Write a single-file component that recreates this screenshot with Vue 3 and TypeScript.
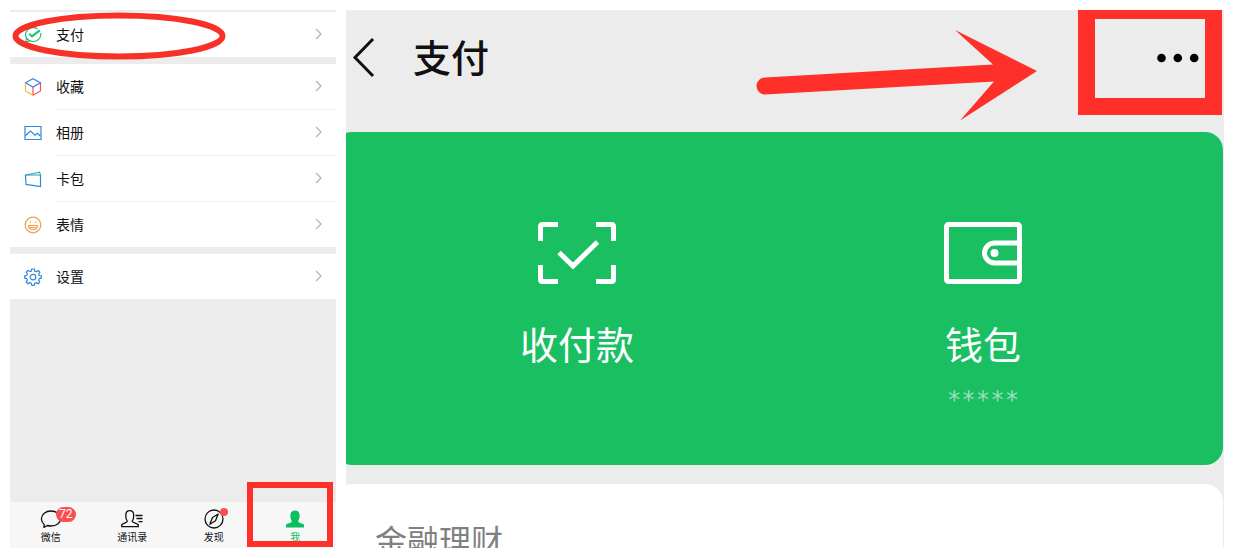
<script setup lang="ts">
type IconName = 'pay' | 'cube' | 'album' | 'cards' | 'sticker' | 'gear'

interface MenuItem {
  label: string
  icon: IconName
}

interface Tab {
  label: string
  icon: 'chat' | 'contacts' | 'discover' | 'me'
  badge?: string
  dot?: boolean
  active?: boolean
}

const groups: MenuItem[][] = [
  [{ label: '支付', icon: 'pay' }],
  [
    { label: '收藏', icon: 'cube' },
    { label: '相册', icon: 'album' },
    { label: '卡包', icon: 'cards' },
    { label: '表情', icon: 'sticker' },
  ],
  [{ label: '设置', icon: 'gear' }],
]

const tabs: Tab[] = [
  { label: '微信', icon: 'chat', badge: '72' },
  { label: '通讯录', icon: 'contacts' },
  { label: '发现', icon: 'discover', dot: true },
  { label: '我', icon: 'me', active: true },
]
</script>

<template>
  <main class="page">
    <section class="profile" aria-label="我">
      <nav class="menu">
        <div v-for="(group, g) in groups" :key="g" class="group">
          <button v-for="item in group" :key="item.label" type="button" class="row">
            <svg class="row-icon" viewBox="0 0 18 18" aria-hidden="true">
              <g v-if="item.icon === 'pay'" stroke="#22c16b">
                <path d="M16.6 7.2A7.6 6.9 0 1 1 13.6 3M2.4 12.2L1.9 16.2L5.4 15" />
                <path d="M5.2 7.8L8 10.4L15.8 4.4" stroke-width="2" />
              </g>
              <g v-else-if="item.icon === 'cube'">
                <path d="M1.500 4.800L9 .8L16.500 4.800L9 9Z" stroke="#3d83e6" />
                <path d="M16.500 4.800V13L9 17.200V9" stroke="#f0506e" />
                <path d="M1.500 4.800V13L9 17.200" stroke="#f5b83d" />
              </g>
              <g v-else-if="item.icon === 'album'" stroke="#2f86dc">
                <path d="M1 2.5H17V15.5H1Z" />
                <path d="M1.5 11.5L6.5 7L11 11.2L13.3 9.2L16.5 12.2" />
              </g>
              <g v-else-if="item.icon === 'cards'">
                <path d="M2 5L15.5 2.2L16.5 4.5" stroke="#2fc27c" />
                <path d="M1.5 5H16.5V16.5L2 14.4Z" stroke="#2d8bd5" />
              </g>
              <g v-else-if="item.icon === 'sticker'" stroke="#f0a050">
                <circle cx="9" cy="9" r="7.8" />
                <path d="M4.5 9.5H13.5C13.4 12 11.5 13.5 9 13.5S4.6 12 4.5 9.5ZM6.2 11.5H11.8" />
                <path d="M5.8 6.2H6.8M11.2 6.2H12.2" stroke-width="1.8" />
              </g>
              <g v-else stroke="#2f86dc" stroke-linejoin="round">
                <path d="M7.7 1H10.3L10.8 3.1L12.3 3.7L14.2 2.5L15.9 4.2L14.7 6L15.2 7.5L17.3 7.8V10.2L15.2 10.6L14.6 12.1L15.8 14L14 15.8L12.2 14.6L10.7 15.2L10.2 17.3H7.8L7.3 15.2L5.8 14.6L4 15.8L2.2 14L3.4 12.1L2.8 10.6L.7 10.2V7.8L2.8 7.4L3.4 5.9L2.2 4.1L3.9 2.4L5.8 3.6L7.2 3.1Z" />
                <circle cx="9" cy="9.1" r="2.8" />
              </g>
            </svg>
            <span class="row-label">
              <span>{{ item.label }}</span>
              <svg class="chevron" viewBox="0 0 7 12" aria-hidden="true"><path d="M1 1L6 6L1 11" /></svg>
            </span>
          </button>
        </div>
      </nav>

      <nav class="tabs">
        <button v-for="tab in tabs" :key="tab.label" type="button" class="tab" :class="{ active: tab.active }">
          <span class="tab-icon">
            <svg viewBox="0 0 24 20" aria-hidden="true">
              <path v-if="tab.icon === 'chat'" d="M5.2 15.4C3.4 14 2.4 12 2.4 9.8C2.4 5.5 6.7 2 12 2S21.6 5.5 21.6 9.8S17.3 17 12 17C10.7 17 9.5 16.8 8.4 16.5L4.9 18.4Z" />
              <g v-else-if="tab.icon === 'contacts'">
                <path d="M1.7 17.7V15.8C2.8 14.3 7.3 13.7 7.3 12.2C6.2 10.7 5.8 9 5.8 6.4C5.8 3.5 7.2 1.7 9.7 1.7S13.7 3.5 13.7 6.4C13.7 9 13.2 10.7 12.2 12.2C12.2 13.7 17 14.3 18.3 15.8V17.7Z" />
                <path d="M15.5 6.5H22.5M16.5 9.5H22.5M18.5 12.7H22.5" />
              </g>
              <g v-else-if="tab.icon === 'discover'">
                <circle cx="12" cy="10" r="9" />
                <path d="M16.2 5L13.5 11.7L7.8 15.2L10.5 8.5Z" />
              </g>
              <path v-else class="solid" d="M3 18.5V15.8C4.2 14.3 9 13.7 9 12.2C7.9 10.7 7.4 9 7.4 6.4C7.4 3.3 9.2 1.5 12 1.5S16.6 3.3 16.6 6.4C16.6 9 16.1 10.7 15 12.2C15 13.7 19.8 14.3 21 15.8V18.5Z" />
            </svg>
            <span v-if="tab.badge" class="badge">{{ tab.badge }}</span>
            <span v-if="tab.dot" class="dot"></span>
          </span>
          <span class="tab-label">{{ tab.label }}</span>
        </button>
        <span class="tab-mark"></span>
      </nav>

      <svg class="ring" viewBox="0 0 214 48" aria-hidden="true">
        <ellipse cx="107" cy="24" rx="103.5" ry="20.5" />
      </svg>
    </section>

    <section class="payment" aria-label="支付">
      <header class="bar">
        <button type="button" class="back" aria-label="返回">
          <svg viewBox="0 0 24 42" aria-hidden="true"><path d="M21 2L3 20.5L21 39" /></svg>
        </button>
        <h1>支付</h1>
        <button type="button" class="more" aria-label="更多">
          <svg viewBox="0 0 42 10" aria-hidden="true">
            <circle cx="4.500" cy="5" r="4.300" />
            <circle cx="20.800" cy="5" r="4.300" />
            <circle cx="37.200" cy="5" r="4.300" />
          </svg>
        </button>
        <svg class="arrow" viewBox="0 0 282 92" aria-hidden="true">
          <path d="M9 48.5L237 35.5L199 1L281 42L204 91.5L238 52.5L9 65.5A8.5 8.5 0 0 1 9 48.5Z" />
        </svg>
        <span class="more-mark"></span>
      </header>

      <div class="wallet">
        <button type="button" class="action">
          <svg viewBox="0 0 78 62" aria-hidden="true">
            <path d="M2.5 19V4.5Q2.5 2.5 4.5 2.5H20M58 2.5H73.5Q75.5 2.5 75.5 4.5V19M75.5 43V57.5Q75.5 59.5 73.5 59.5H58M20 59.5H4.5Q2.5 59.5 2.5 57.5V43" />
            <path d="M21 30.5L35 44L59.5 20" />
          </svg>
          <span class="action-label">收付款</span>
        </button>
        <button type="button" class="action">
          <svg viewBox="0 0 78 62" aria-hidden="true">
            <rect x="2.5" y="2.5" width="73" height="57" rx="2" />
            <path d="M75 21H50.500A10 10 0 0 0 50.500 41H75" />
            <circle class="clasp" cx="50.500" cy="31" r="4" />
          </svg>
          <span class="action-label">钱包</span>
          <span class="balance">*****</span>
        </button>
      </div>

      <div class="finance">
        <h2>金融理财</h2>
      </div>
    </section>
  </main>
</template>

<style>
body {
  margin: 0;
  background: #fff;
}
</style>

<style scoped>
.page {
  box-sizing: border-box;
  height: 100vh;
  padding: 10px;
  display: grid;
  grid-template-columns: 326fr 878fr;
  gap: 10px;
  font-family: "Liberation Sans", "Noto Sans CJK SC", sans-serif;
  color: #111;
}

button {
  margin: 0;
  padding: 0;
  border: 0;
  background: none;
  font: inherit;
  color: inherit;
  cursor: pointer;
}

svg {
  display: block;
  fill: none;
}

.profile {
  position: relative;
  min-height: 0;
  display: flex;
  flex-direction: column;
  justify-content: space-between;
  background: #ececec;
}

.menu {
  display: flex;
  flex-direction: column;
  gap: 7px;
  padding-top: 2px;
}

.group {
  background: #fff;
}

.row {
  width: 100%;
  display: flex;
  align-items: center;
  gap: 14px;
  padding-left: 14px;
  font-size: 14px;
  text-align: left;
}

.row-icon {
  width: 18px;
  height: 18px;
  stroke-width: 1.2;
}

.row-label {
  flex: 1;
  height: 43px;
  display: flex;
  align-items: center;
  justify-content: space-between;
  padding: 0 14px 2px 0;
}

.row:not(:last-child) .row-label {
  border-bottom: 1px solid #f1f1f1;
}

.chevron {
  width: 7px;
  height: 12px;
  stroke: #b4b4b4;
  stroke-width: 1.3;
}

.tabs {
  position: relative;
  display: grid;
  grid-template-columns: repeat(4, 1fr);
  background: #f7f7f7;
}

.tab {
  height: 46px;
  display: flex;
  flex-direction: column;
  align-items: center;
  padding-top: 7px;
}

.tab-icon {
  position: relative;
}

.tab-icon svg {
  width: 24px;
  height: 20px;
  stroke: #111;
  stroke-width: 1.3;
  stroke-linejoin: round;
}

.tab-icon .solid {
  fill: #07c160;
  stroke: none;
}

.tab-label {
  font-size: 10px;
  line-height: 17px;
}

.active {
  color: #07c160;
}

.badge {
  position: absolute;
  left: 17px;
  top: -2px;
  width: 20px;
  border-radius: 8px;
  background: #f94f50;
  color: #fff;
  font: 12px/15px Roboto, sans-serif;
  text-align: center;
}

.dot {
  position: absolute;
  left: 18px;
  top: -1px;
  width: 8px;
  height: 8px;
  border-radius: 50%;
  background: #fa4b57;
}

.tab-mark {
  position: absolute;
  right: 3px;
  top: -20px;
  bottom: 1px;
  width: 74px;
  border: 6px solid #ff3029;
  pointer-events: none;
}

.ring {
  position: absolute;
  left: 2px;
  top: 2px;
  width: 214px;
  height: 48px;
  stroke: #f83128;
  stroke-width: 6;
  pointer-events: none;
}

.payment {
  min-height: 0;
  overflow: hidden;
  background: #ececec;
}

.bar {
  position: relative;
  box-sizing: border-box;
  height: 122px;
  display: flex;
  align-items: center;
  padding: 0 25px 26px 6px;
}

.back svg {
  width: 24px;
  height: 42px;
  stroke: #111;
  stroke-width: 3;
}

h1 {
  flex: 1;
  margin: 0 0 0 37px;
  padding-top: 2px;
  font-size: 38px;
  line-height: 48px;
  font-weight: 500;
}

.more svg {
  width: 42px;
  height: 10px;
  fill: #000;
}

.arrow {
  position: absolute;
  right: 186px;
  top: 19px;
  width: 282px;
  height: 92px;
  fill: #ff3029;
  pointer-events: none;
}

.more-mark {
  position: absolute;
  right: 2px;
  top: 0;
  width: 110px;
  height: 79px;
  border: 17px solid #ff3029;
  border-top-width: 9px;
  pointer-events: none;
}

.wallet {
  box-sizing: border-box;
  height: 333px;
  margin: 0 1px 19px -12px;
  padding: 90px 37px 0 40px;
  display: grid;
  grid-template-columns: 1fr 1fr;
  align-items: start;
  border-radius: 18px;
  background: #1abf62;
  color: #fff;
}

.action {
  display: flex;
  flex-direction: column;
  align-items: center;
}

.action svg {
  width: 78px;
  height: 62px;
  stroke: #fff;
  stroke-width: 5;
}

.action .clasp {
  fill: #fff;
  stroke: none;
}

.action-label {
  margin-top: 36px;
  font-size: 38px;
  line-height: 52px;
}

.balance {
  margin-top: 12px;
  font: 24px/32px "DejaVu Sans Mono", monospace;
  color: #98dfb7;
}

.finance {
  height: 120px;
  margin: 0 1px 0 -12px;
  padding: 34px 0 0 41px;
  border-radius: 18px;
  background: #fff;
}

h2 {
  margin: 0;
  font-size: 32px;
  line-height: 48px;
  font-weight: 400;
  color: #808080;
}
</style>
